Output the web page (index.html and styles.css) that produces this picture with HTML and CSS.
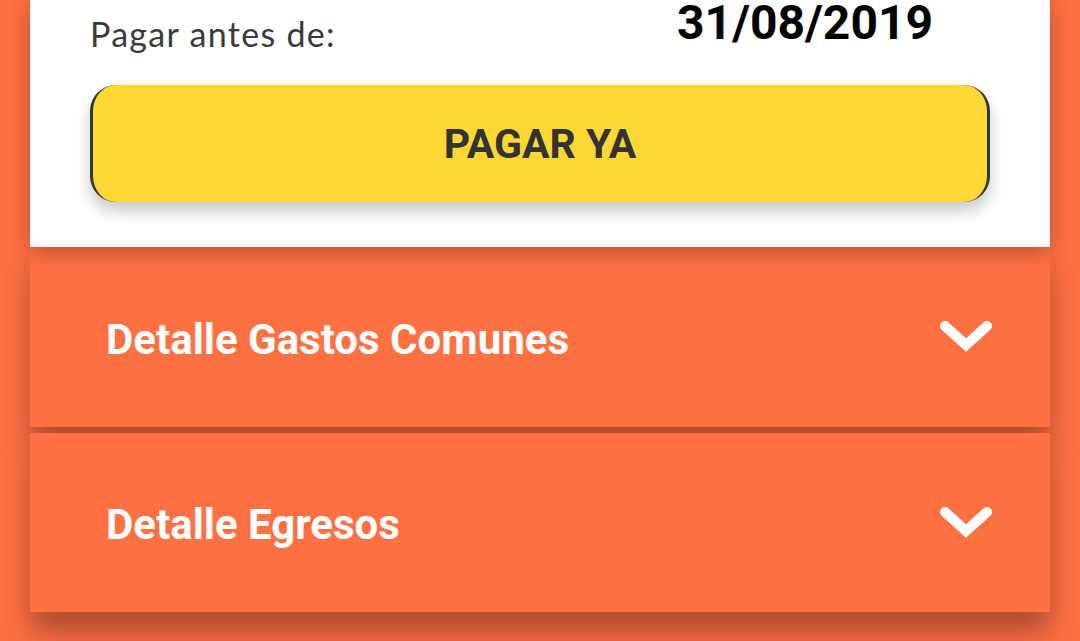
FILE: index.html
```html
<!DOCTYPE html>
<html lang="es">
<head>
<meta charset="utf-8">
<title>Pagar</title>
<link rel="stylesheet" href="styles.css">
</head>
<body>
<div class="page">
  <section class="card">
    <div class="due-row">
      <span class="due-label">Pagar antes de:</span>
      <span class="due-date">31/08/2019</span>
    </div>
    <button class="pay-btn" type="button">PAGAR YA</button>
  </section>
  <div class="accordion">
    <div class="acc-item">
      <span class="acc-title">Detalle Gastos Comunes</span>
      <svg class="chev" width="52" height="32" viewBox="0 0 52 32"><polyline points="5,5 26,24 47,5" fill="none" stroke="#fff" stroke-width="10" stroke-linecap="round" stroke-linejoin="miter"/></svg>
    </div>
    <div class="acc-item">
      <span class="acc-title">Detalle Egresos</span>
      <svg class="chev" width="52" height="32" viewBox="0 0 52 32"><polyline points="5,5 26,24 47,5" fill="none" stroke="#fff" stroke-width="10" stroke-linecap="round" stroke-linejoin="miter"/></svg>
    </div>
  </div>
</div>
</body>
</html>
```
FILE: styles.css
```css
html {
  overflow: hidden;
  background: #ff7043;
}
body {
  margin: 0;
  padding: 0;
  background: #ff7043;
}
.page {
  padding: 0 30px 60px;
}
.card {
  position: relative;
  z-index: 2;
  background: #fff;
  padding: 0 60px 45px;
  box-shadow: 0 4px 22px rgba(0, 0, 0, 0.3);
}
.due-row {
  height: 85px;
  display: flex;
  align-items: flex-start;
}
.due-label {
  font-family: Lato, "Noto Sans", sans-serif;
  font-size: 34px;
  letter-spacing: 1.3px;
  line-height: 1;
  color: #3a3a3a;
  margin-top: 17px;
}
.due-date {
  font-family: Roboto, sans-serif;
  font-weight: 700;
  font-size: 48px;
  line-height: 1;
  color: #000;
  margin-left: auto;
  margin-right: 57px;
  margin-top: -1px;
}
.pay-btn {
  display: block;
  width: 100%;
  height: 117px;
  background: #fdd835;
  border: none;
  border-left: 3px solid #333;
  border-right: 3px solid #333;
  border-radius: 26px;
  font-family: Roboto, sans-serif;
  font-weight: 700;
  font-size: 41px;
  color: #333;
  box-shadow: 0 9px 16px rgba(0, 0, 0, 0.22);
  padding: 0;
}
.accordion {
  display: flex;
  flex-direction: column;
  gap: 6px;
}
.acc-item {
  height: 180px;
  background: #ff7043;
  display: flex;
  align-items: center;
  justify-content: space-between;
  padding: 0 58px 0 76px;
  box-shadow: 0 20px 28px rgba(0, 0, 0, 0.32);
}
.acc-item + .acc-item {
  height: 179px;
}
.acc-title {
  font-family: Roboto, sans-serif;
  font-weight: 700;
  font-size: 42px;
  color: #fff;
  padding-top: 4px;
}
.chev {
  display: block;
}
```
